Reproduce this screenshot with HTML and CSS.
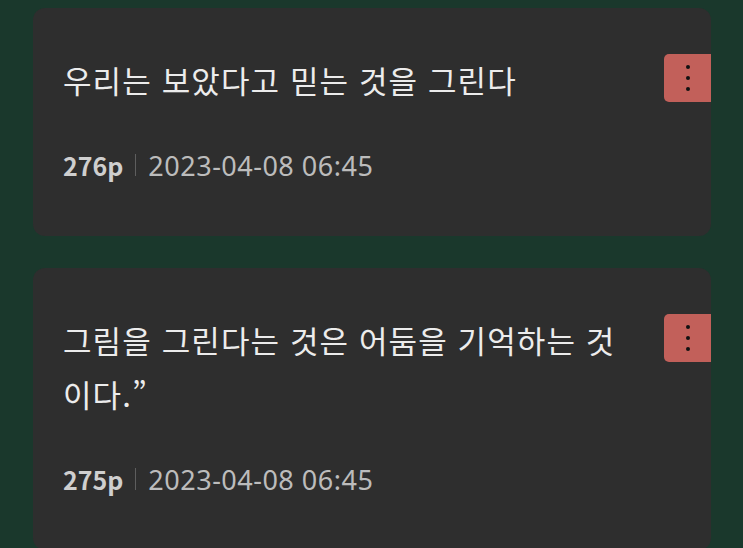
FILE: index.html
```html
<!DOCTYPE html>
<html lang="ko">
<head>
  <meta charset="UTF-8" />
  <meta name="viewport" content="width=device-width, initial-scale=1.0" />
  <title>밑줄 목록</title>
  <link rel="stylesheet" href="styles.css">
</head>
<body>
  <div class="list">
    <div class="card">
      <div class="card-body">
        <p class="quote">우리는 보았다고 믿는 것을 그린다</p>
        <div class="meta">
          <span class="page">276p</span>
          <span class="sep"></span>
          <span class="date">2023-04-08 06:45</span>
        </div>
      </div>
      <button class="menu" aria-label="더보기"><i></i><i></i><i></i></button>
    </div>

    <div class="card">
      <div class="card-body">
        <p class="quote">그림을 그린다는 것은 어둠을 기억하는 것이다.”</p>
        <div class="meta">
          <span class="page">275p</span>
          <span class="sep"></span>
          <span class="date">2023-04-08 06:45</span>
        </div>
      </div>
      <button class="menu" aria-label="더보기"><i></i><i></i><i></i></button>
    </div>
  </div>
</body>
</html>
```

FILE: styles.css
```css
:root {
  --bg: #1a382c;
  --card: #2e2e2e;
  --fg: #ececec;
  --muted: #bcbcbc;
  --accent: #c2605a;
}

* {
  box-sizing: border-box;
}

body {
  margin: 0;
  background: var(--bg);
  color: var(--fg);
  font-family: "Noto Sans CJK KR", "Noto Sans", sans-serif;
  overflow: hidden;
}

.list {
  display: flex;
  flex-direction: column;
  gap: 32px;
  padding: 8px 32px 0 33px;
}

.card {
  display: flex;
  align-items: flex-start;
  background: var(--card);
  border-radius: 12px;
  overflow: hidden;
}

.card-body {
  flex: 1;
  padding: 45px 40px 55px 30px;
}

.quote {
  margin: 0;
  font-size: 31px;
  line-height: 54px;
  font-weight: 400;
  letter-spacing: 1.1px;
}

.meta {
  display: flex;
  align-items: center;
  margin-top: 42px;
  height: 32px;
  font-size: 25px;
  color: var(--muted);
}

.page {
  font-weight: 700;
  color: #cfcfcf;
}

.date {
  font-family: "Noto Sans", sans-serif;
  font-size: 27px;
  letter-spacing: 0.5px;
}

.sep {
  width: 1px;
  height: 22px;
  background: #5e5e5e;
  margin: 0 12px;
}

.menu {
  flex: none;
  display: flex;
  flex-direction: column;
  align-items: center;
  justify-content: center;
  gap: 7px;
  width: 47px;
  height: 48px;
  margin-top: 46px;
  padding: 0;
  border: none;
  border-radius: 5px 0 0 5px;
  background: var(--accent);
  cursor: pointer;
}

.menu i {
  width: 4px;
  height: 4px;
  border-radius: 50%;
  background: #111;
}
```
